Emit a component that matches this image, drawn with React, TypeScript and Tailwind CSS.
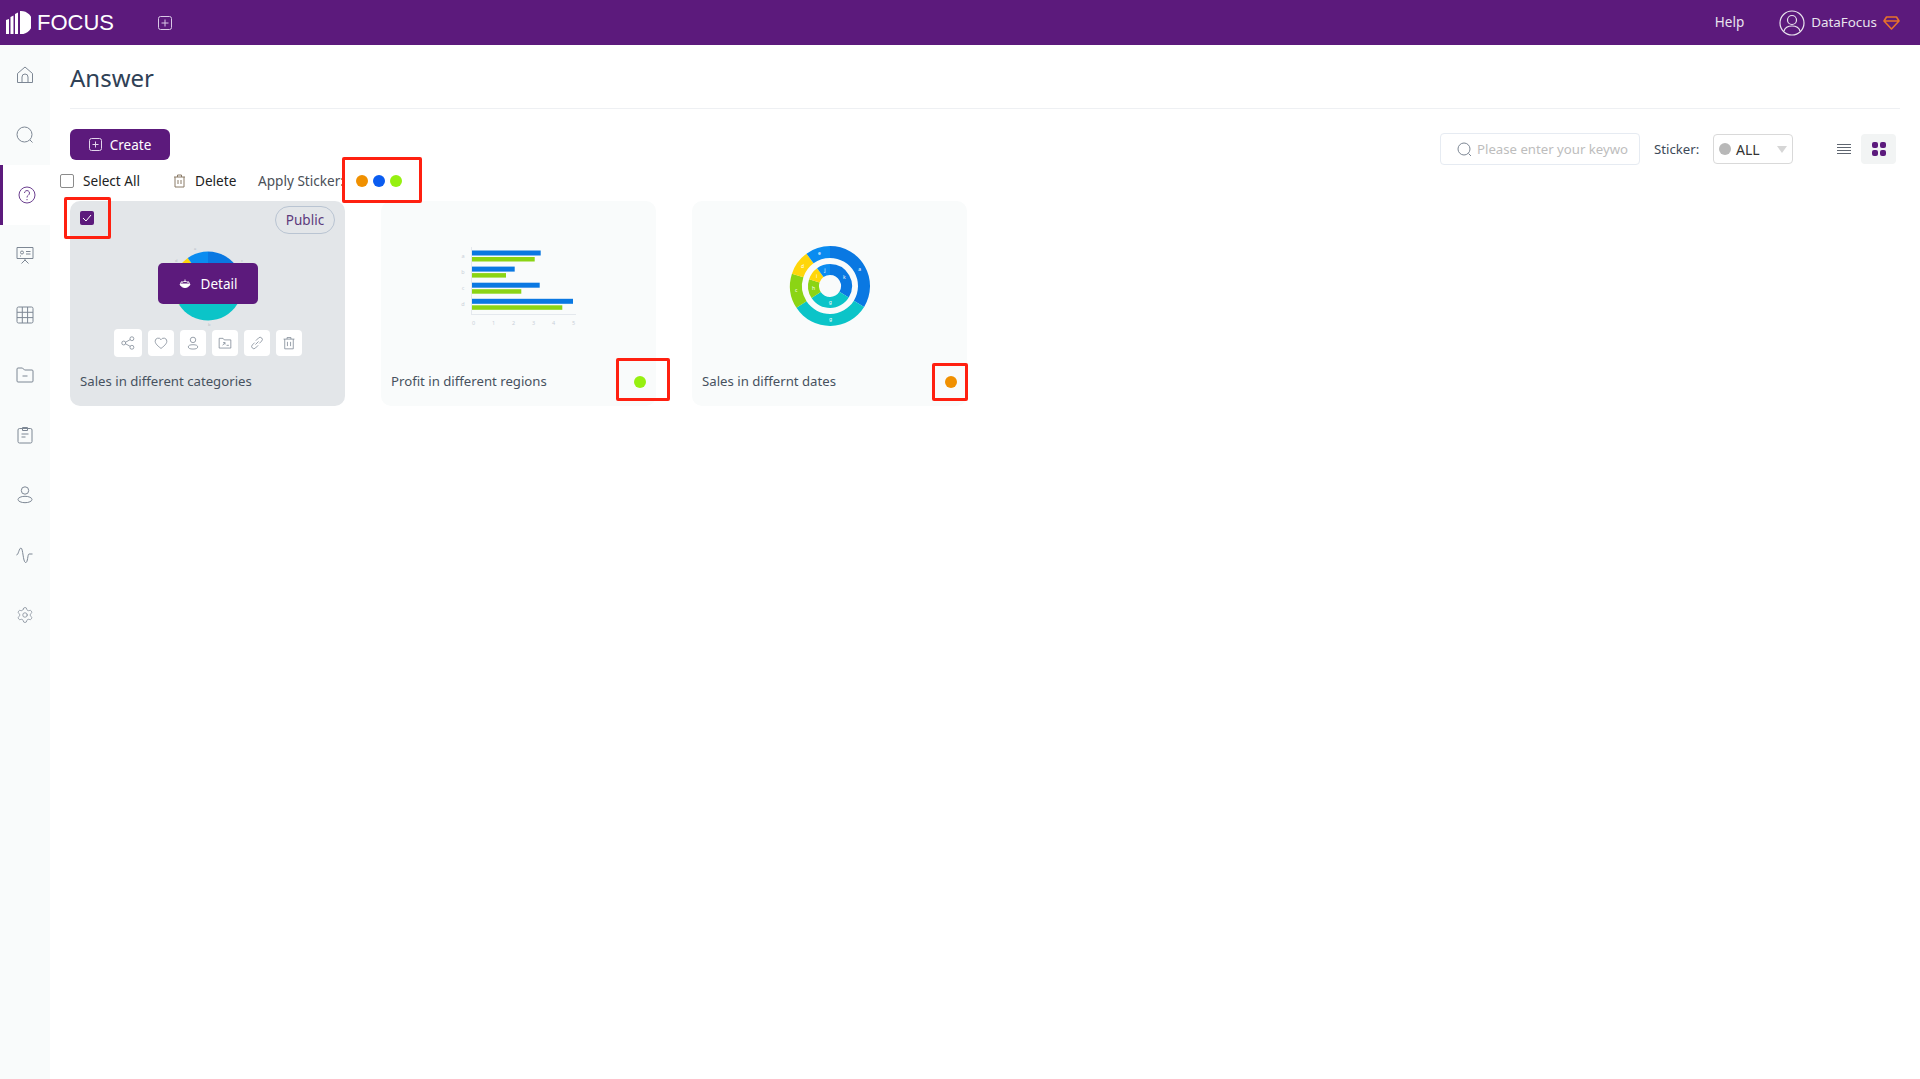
import type { ReactNode } from 'react';
import { Settings } from 'lucide-react';

function Ic({ size = 18, children }: { size?: number; children: ReactNode }) {
  return (
    <svg width={size} height={size} viewBox="0 0 18 18" fill="none" stroke="currentColor" strokeWidth="1">
      {children}
    </svg>
  );
}

const sideIcons: ReactNode[] = [
  <Ic><path d="M1.5 16.5V7.5L9 1l7.5 6.5v9z" strokeLinejoin="round" /><path d="M6 16.5V11a3 3 0 0 1 6 0v5.5" /></Ic>,
  <Ic><circle cx="8.5" cy="8.5" r="7.5" /><path d="M14 14l2.5 2.5" /></Ic>,
  <Ic><circle cx="9" cy="9" r="8" /><path d="M6.5 7a2.5 2.5 0 1 1 3.8 2.2C9.4 9.8 9 10.3 9 11.5M9 13v1.2" /></Ic>,
  <Ic><path d="M1 1.5h16v11H1zM9 12.500v1.5M5.5 17.5L9 14l3.5 3.5" /><circle cx="6" cy="6.5" r="1.5" /><path d="M10 5.5h4.5M10 8h4.5M4 10h1" /></Ic>,
  <Ic><rect x="1" y="1" width="16" height="16" rx="1.5" /><path d="M1 6.3h16M1 11.6h16M6.3 1v16M11.6 1v16" /></Ic>,
  <Ic><path d="M1 15V3a1 1 0 0 1 1-1h4.5l2 2H16a1 1 0 0 1 1 1v10a1 1 0 0 1-1 1H2a1 1 0 0 1-1-1z" /><path d="M6.5 10h5" /></Ic>,
  <Ic><rect x="2" y="2.5" width="14" height="14.5" rx="1.5" /><path d="M6.5 4.5V1.500h5v3zM5.5 8h7M5.5 11h4" /></Ic>,
  <Ic><circle cx="9" cy="4.5" r="3.7" /><ellipse cx="9" cy="13.5" rx="7" ry="3.2" /></Ic>,
  <Ic><path d="M0.5 9C2.5 9 3 2 5 2s2 14 4.500 14.500S11.5 8 13 8h3.5" /></Ic>,
  <Settings size={18} strokeWidth={1} />,
];

function Sidebar() {
  return (
    <aside className="w-[50px] shrink-0 bg-[#f9fbfb] flex flex-col">
      {sideIcons.map((icon, i) => (
        <div
          key={i}
          className={
            i === 2
              ? 'h-[60px] pb-[1px] flex items-center justify-center bg-white border-l-[3px] border-[#5c1a7c] text-[#6b3f8f]'
              : 'h-[60px] pb-[1px] flex items-center justify-center text-[#7d8794]'
          }
        >
          {icon}
        </div>
      ))}
    </aside>
  );
}

function Header() {
  return (
    <header className="h-[45px] shrink-0 bg-[#5c1a7c] flex items-center text-[#e9e4ee]">
      <svg width="25" height="25" viewBox="0 0 25 25" className="ml-[6px]">
        <path d="M0 10l3-1v15H0zM4.500 7l3-1.500V24h-3zM9 4l3-1.500V24H9z" fill="#fff" />
        <path d="M14 1h1a11.500 11.500 0 0 1 0 23h-1z" fill="#fff" />
      </svg>
      <span className="ml-[6px] w-[76px] text-[22px] leading-none text-white font-['Liberation_Sans',sans-serif]">FOCUS</span>
      <svg width="14" height="14" viewBox="0 0 14 14" fill="none" stroke="#d9c8e6" className="ml-[45px]">
        <rect x="0.5" y="0.5" width="13" height="13" rx="2" />
        <path d="M7 3.5v7M3.5 7h7" />
      </svg>
      <span className="ml-auto text-[13.5px]">Help</span>
      <svg width="26" height="26" viewBox="0 0 26 26" fill="none" stroke="#e9e4ee" strokeWidth="1.2" className="ml-[35px]">
        <circle cx="13" cy="13" r="12" />
        <circle cx="13" cy="10" r="4.5" />
        <path d="M5 21c1-3.500 4-5 8-5s7 1.500 8 5" />
      </svg>
      <span className="ml-[6px] text-[13.4px]">DataFocus</span>
      <svg width="17" height="14" viewBox="0 0 17 14" fill="none" stroke="#e8722a" strokeWidth="1.6" className="ml-[6px] mr-[20px]">
        <path d="M3.500 1h10L16 5l-7.500 8L1 5zM1 5h15" strokeLinejoin="round" />
      </svg>
    </header>
  );
}

function Toolbar() {
  return (
    <div className="flex justify-between">
      <div>
        <button className="w-[100px] h-[31px] bg-[#5c1a7c] rounded-[6px] text-white text-[13.5px] flex items-center justify-center gap-[8px]">
          <svg width="13" height="13" viewBox="0 0 13 13" fill="none" stroke="#e3d5ec">
            <rect x="0.5" y="0.5" width="12" height="12" rx="2" />
            <path d="M6.5 3.5v6M3.500 6.500h6" />
          </svg>
          <span className="pt-px">Create</span>
        </button>
        <div className="flex items-center h-[20px] mt-[11px] -ml-[10px] text-[13.6px]">
          <span className="w-[14px] h-[14px] border border-[#8b8b8b] rounded-[2px] bg-white" />
          <span className="ml-[9px] pt-px w-[57px] text-[#222] whitespace-nowrap">Select All</span>
          <svg width="13" height="14" viewBox="0 0 13 14" fill="none" stroke="#8a7a66" className="ml-[33px]">
            <path d="M1 3h11M4.500 3V1h4v2M2 3v10h9V3M5 6v4M8 6v4" />
          </svg>
          <span className="ml-[9px] pt-px w-[40px] text-[#222]">Delete</span>
          <span className="ml-[23px] pt-px w-[84px] text-[#4a4f57] whitespace-nowrap">Apply Sticker:</span>
          <span className="ml-[14px] flex gap-[5px]">
            <span className="w-[12px] h-[12px] rounded-full bg-[#f09000]" />
            <span className="w-[12px] h-[12px] rounded-full bg-[#0a5cf0]" />
            <span className="w-[12px] h-[12px] rounded-full bg-[#96f010]" />
          </span>
        </div>
      </div>
      <div className="flex items-center h-[32px] mt-[4px] mr-[4px] text-[13.2px]">
        <div className="w-[200px] h-[32px] border border-[#e6ebf2] rounded-[4px] flex items-center pl-[16px]">
          <svg width="15" height="15" viewBox="0 0 15 15" fill="none" stroke="#7d8794">
            <circle cx="7" cy="7" r="6" />
            <path d="M11.5 11.5l2.500 2.500" />
          </svg>
          <span className="ml-[5px] pt-px text-[#bdbdbd] whitespace-nowrap overflow-hidden w-[153px]">Please enter your keywo</span>
        </div>
        <span className="ml-[14px] pt-px w-[45px] text-[#3e4a59]">Sticker:</span>
        <div className="ml-[14px] w-[80px] h-[30px] border border-[#d9d9d9] rounded-[4px] flex items-center pl-[5px]">
          <span className="w-[12px] h-[12px] rounded-full bg-[#b8b8b8]" />
          <span className="ml-[5px] pt-px text-[14px] text-[#333]">ALL</span>
          <span className="ml-auto mr-[5px] w-0 h-0 border-l-[5px] border-r-[5px] border-t-[7px] border-l-transparent border-r-transparent border-t-[#d6d6d6]" />
        </div>
        <svg width="14" height="10" viewBox="0 0 14 10" stroke="#5f6670" className="ml-[44px]">
          <path d="M0 .5h14M0 3.500h14M0 6.500h14M0 9.500h14" />
        </svg>
        <div className="ml-[10px] w-[35px] h-[30px] bg-[#f2f4f4] rounded-[4px] grid grid-cols-2 content-center justify-center gap-[2px] px-[11px]">
          <span className="w-[6px] h-[6px] rounded-[2px] bg-[#5c1a7c]" />
          <span className="w-[6px] h-[6px] rounded-[2px] bg-[#5c1a7c]" />
          <span className="w-[6px] h-[6px] rounded-[2px] bg-[#5c1a7c]" />
          <span className="w-[6px] h-[6px] rounded-[2px] bg-[#5c1a7c]" />
        </div>
      </div>
    </div>
  );
}

function slice(r0: number, r1: number, a0: number, a1: number) {
  const pt = (r: number, a: number) => {
    const t = (a * Math.PI) / 180;
    return `${(r * Math.sin(t)).toFixed(2)} ${(-r * Math.cos(t)).toFixed(2)}`;
  };
  const large = a1 - a0 > 180 ? 1 : 0;
  return `M${pt(r1, a0)}A${r1} ${r1} 0 ${large} 1 ${pt(r1, a1)}L${pt(r0, a1)}A${r0} ${r0} 0 ${large} 0 ${pt(r0, a0)}Z`;
}

const segs = [
  { a0: 0, a1: 121.5, c: '#0a78e2' },
  { a0: 121.5, a1: 237, c: '#0bc4c8' },
  { a0: 237, a1: 288, c: '#8bd414' },
  { a0: 288, a1: 324, c: '#ffd60a' },
  { a0: 324, a1: 360, c: '#0a8cf0' },
];

function PieChart() {
  return (
    <svg width="90" height="90" viewBox="-45 -45 90 90">
      {segs.map((s) => (
        <path key={s.a0} d={slice(0, 34.5, s.a0, s.a1)} fill={s.c} />
      ))}
      <text x="-14" y="-36" fontSize="4" fill="#b5bcc6">a</text>
      <text x="-33" y="-24" fontSize="4" fill="#b5bcc6">d</text>
      <text x="33" y="-24" fontSize="4" fill="#b5bcc6">c</text>
      <text x="0" y="40" fontSize="4" fill="#b5bcc6">b</text>
    </svg>
  );
}

function Donut() {
  const outer = ['a', 'g', 'c', 'd', 'e'];
  const inner = ['k', 'g', 'h', 'i', 'j'];
  return (
    <svg width="90" height="90" viewBox="-45 -45 90 90">
      {segs.map((s, i) => {
        const m = ((s.a0 + s.a1) / 2) * (Math.PI / 180);
        return (
          <g key={s.a0}>
            <path d={slice(28, 40, s.a0, s.a1)} fill={s.c} />
            <path d={slice(11, 22, s.a0, s.a1)} fill={s.c} />
            <text x={34 * Math.sin(m)} y={-34 * Math.cos(m) + 1.5} fontSize="5" textAnchor="middle" fill="#fff">{outer[i]}</text>
            <text x={16.5 * Math.sin(m)} y={-16.5 * Math.cos(m) + 1.5} fontSize="5" textAnchor="middle" fill="#fff">{inner[i]}</text>
          </g>
        );
      })}
    </svg>
  );
}

const bars = [
  [68.7, 62.7],
  [42.7, 34],
  [67.7, 49.3],
  [101, 90.3],
];

function BarChart() {
  return (
    <svg width="130" height="90" viewBox="0 -5 130 90">
      <path d="M17.5 1v68M17.5 68.500H122" stroke="#e4e8ed" />
      {bars.map(([b, g], i) => (
        <g key={i}>
          <rect x="18" y={4.5 + i * 16.1} width={b} height="5" fill="#0a78e2" />
          <rect x="18" y={11 + i * 16.1} width={g} height="4.5" fill="#8bd414" />
          <text x="9" y={11.5 + i * 16.1} fontSize="5.5" textAnchor="middle" fill="#c9d0d9">{'abcd'[i]}</text>
        </g>
      ))}
      {[0, 1, 2, 3, 4, 5].map((n) => (
        <text key={n} x={19.5 + n * 20} y="79" fontSize="5.5" textAnchor="middle" fill="#c9d0d9">{n}</text>
      ))}
    </svg>
  );
}

const actions: ReactNode[] = [
  <><circle cx="14" cy="3.5" r="2.5" /><circle cx="3.5" cy="9" r="2.5" /><circle cx="14" cy="14.5" r="2.5" /><path d="M5.800 8l6-3.300M5.800 10l6 3.300" /></>,
  <path d="M9 16C3 11.500 1.500 9 1.500 6.500A4 4 0 0 1 9 4.800a4 4 0 0 1 7.500 1.700C16.500 9 15 11.500 9 16z" />,
  <><circle cx="9" cy="5" r="3.5" /><ellipse cx="9" cy="14" rx="6" ry="2.8" /></>,
  <><path d="M1.500 15.500V3h5l1.500 2h8.500v10.500z" /><path d="M6 12l3-3.500M9 8.500H6.500M9 8.500V11M11 12h3" /></>,
  <><path d="M7.500 6L11 2.500a2.600 2.600 0 0 1 4 4L12 9.500" /><path d="M10.500 12L7 15.500a2.600 2.600 0 0 1-4-4L6 8.500" /><path d="M7 11l4-4" /></>,
  <path d="M2 4h14M6.500 4V2h5v2M3.500 4v12.500h11V4M7 7.500v5.500M11 7.500v5.500" />,
];

function HoverOverlay() {
  return (
    <>
      <span className="absolute top-[5px] right-[10px] w-[60px] h-[28px] pt-px rounded-full border border-[#b9c4d2] flex items-center justify-center text-[13.5px] text-[#5c3a7c]">
        Public
      </span>
      <span className="absolute top-[10px] left-[10px] w-[14px] h-[14px] rounded-[2px] bg-[#5c1a7c] flex items-center justify-center">
        <svg width="10" height="8" viewBox="0 0 10 8" fill="none" stroke="#fff" strokeWidth="1">
          <path d="M1 4l3 3 5-6" />
        </svg>
      </span>
      <button className="absolute top-[62px] left-[88px] w-[100px] h-[41px] rounded-[5px] bg-[#5c1a7c] text-white text-[13.5px] flex items-center justify-center gap-[10px]">
        <svg width="12" height="10" viewBox="0 0 12 10" fill="none" stroke="#fff">
          <path d="M1 5h10c-.5 2-2.500 3.500-5 3.500S1.500 7 1 5z" fill="#fff" />
          <path d="M1 4.500C2.500 3 4 2.500 6 2.500s3.500.5 5 2M2.500 2.500l1 1M6 .5v2M9.500 2.500l-1 1" strokeWidth=".9" />
        </svg>
        <span className="pt-px">Detail</span>
      </button>
      <div className="absolute top-[128px] left-[44px] flex items-center gap-[6px]">
        {actions.map((a, i) => (
          <span
            key={i}
            className={
              i === 0
                ? 'w-[28px] h-[28px] rounded-[4px] bg-white flex items-center justify-center text-[#7d8794]'
                : 'w-[26px] h-[26px] rounded-[4px] bg-white flex items-center justify-center text-[#7d8794]'
            }
          >
            <Ic size={14}>{a}</Ic>
          </span>
        ))}
      </div>
    </>
  );
}

function Card({ title, dot, active, children }: { title: string; dot?: string; active?: boolean; children: ReactNode }) {
  return (
    <div className={active ? 'relative w-[275px] h-[205px] rounded-[10px] bg-[#e3e6e9] flex flex-col' : 'relative w-[275px] h-[205px] rounded-[10px] bg-[#f9fbfb] flex flex-col'}>
      <div className="h-[170px] flex items-center justify-center">{children}</div>
      <div className="flex items-center justify-between px-[10px] pt-[1px] h-[20px] text-[13.2px] text-[#47525f]">
        <span>{title}</span>
        {dot && <span className="w-[12px] h-[12px] rounded-full" style={{ backgroundColor: dot }} />}
      </div>
      {active && <HoverOverlay />}
    </div>
  );
}

// red markup boxes drawn on top of the screenshot
function Mark({ className }: { className: string }) {
  return <div className={`absolute border-[3px] border-[#ff2010] rounded-[2px] ${className}`} />;
}

export default function App() {
  return (
    <div className="relative h-screen flex flex-col bg-white overflow-hidden font-['Noto_Sans','Open_Sans',sans-serif]">
      <Header />
      <div className="flex flex-1">
        <Sidebar />
        <main className="flex-1 pl-[20px] pr-[20px]">
          <div className="h-[64px] pt-[3px] border-b border-[#eef0f3] flex items-center">
            <h1 className="text-[24px] text-[#2f4156]">Answer</h1>
          </div>
          <div className="mt-[20px]">
            <Toolbar />
          </div>
          <div className="flex gap-[36px] mt-[10px]">
            <Card title="Sales in different categories" active>
              <PieChart />
            </Card>
            <Card title="Profit in different regions" dot="#96f010">
              <BarChart />
            </Card>
            <Card title="Sales in differnt dates" dot="#f09000">
              <Donut />
            </Card>
          </div>
        </main>
      </div>
      <Mark className="left-[342px] top-[157px] w-[80px] h-[46px]" />
      <Mark className="left-[64px] top-[197px] w-[47px] h-[42px]" />
      <Mark className="left-[616px] top-[358px] w-[54px] h-[43px]" />
      <Mark className="left-[932px] top-[363px] w-[36px] h-[38px]" />
    </div>
  );
}
